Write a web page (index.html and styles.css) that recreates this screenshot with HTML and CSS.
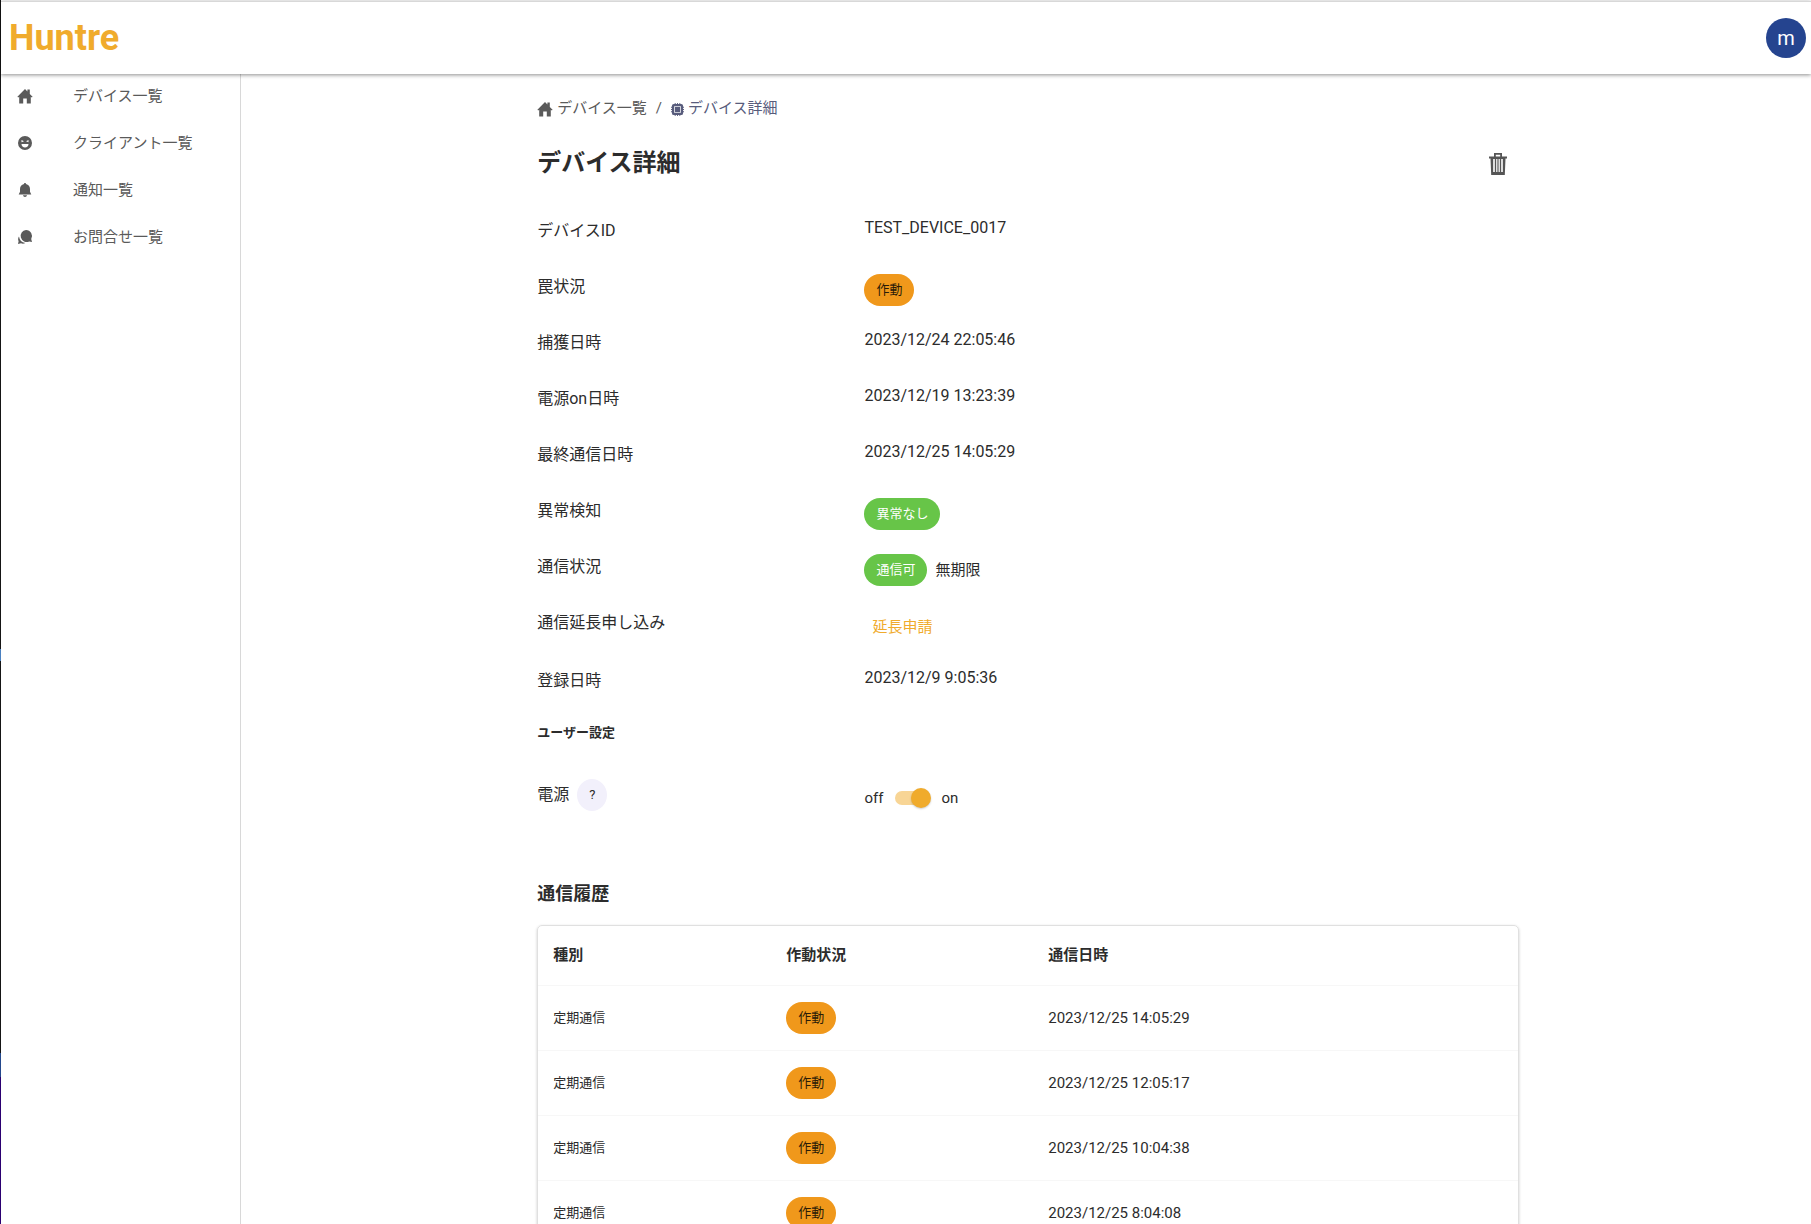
FILE: index.html
```html
<!DOCTYPE html>
<html lang="ja">
<head>
<meta charset="utf-8">
<title>デバイス詳細 | Huntre</title>
<link rel="stylesheet" href="styles.css">
</head>
<body>
<svg class="sprite" aria-hidden="true">
  <symbol id="home" viewBox="0 0 16 16"><path d="M8 1 .4 8.700l.8.8 1-.8V15.500h4v-5h3.600v5h4V8.700l1 .8.8-.8-2.800-2.700V1.600h-2.400v2z"/></symbol>
  <symbol id="smile" viewBox="0 0 16 16"><path fill-rule="evenodd" d="M8 1a7 7 0 1 0 0 14A7 7 0 0 0 8 1zM4.500 5l2.500 1.200-2.500 1zM11.500 5v2.200L9 6.200zM4.500 9h7c0 2.200-1.500 3.600-3.500 3.600S4.500 11.200 4.500 9z"/></symbol>
  <symbol id="bell" viewBox="0 0 16 16"><path d="M8 1c.6 0 1 .4 1 1 2.500.5 4 2.400 4 5v2.800l1.300 2.700H1.700L3 9.800V7c0-2.600 1.500-4.500 4-5 0-.6.4-1 1-1zM6 13.300h4c-.2 1-1 1.600-2 1.600s-1.800-.6-2-1.600z"/></symbol>
  <symbol id="chat" viewBox="0 0 16 16"><path d="M9 1a6 6 0 0 1 5.200 9l.8 3-2.800-.6A6 6 0 1 1 9 1z"/><path d="M2 7.500a7.500 7.500 0 0 0 6.300 6.400c-1.300.9-2.800 1-4.300.4L1 15l.6-2.800c-.8-1.600-.5-3.400.4-4.700z"/></symbol>
  <symbol id="chip" viewBox="1 1 14 14"><path fill-rule="evenodd" d="M4 2h1V1h1v1h1.500V1h1v1H10V1h1v1h1a2 2 0 0 1 2 2v1h1v1h-1v1.500h1v1h-1V10h1v1h-1v1a2 2 0 0 1-2 2h-1v1h-1v-1H8.500v1h-1v-1H6v1H5v-1H4a2 2 0 0 1-2-2v-1H1v-1h1V8.500H1v-1h1V6H1V5h1V4a2 2 0 0 1 2-2zM4.400 4.400v7.200h7.200V4.400z"/><path d="M5.200 5.200h5.600v5.600H5.200z"/></symbol>
  <symbol id="trash" viewBox="0 0 20 22"><path fill-rule="evenodd" d="M6 0h8v3.500h5V5.500h-1.500L16.800 22H3.200L2.500 5.500H1v-2h5zM7.800 1.700v1.800h4.400V1.700zM5.200 6v13h1.600V6zM8.200 6v13h1.200V6zM10.600 6v13h1.200V6zM13.200 6v13h1.600V6z"/></symbol>
</svg>
<header class="topbar">
  <a class="logo" href="#">Huntre</a>
  <button class="avatar" type="button" aria-label="アカウント">m</button>
</header>
<div class="layout">
  <nav class="sidebar">
    <a href="#"><svg class="icon"><use href="#home"/></svg>デバイス一覧</a>
    <a href="#"><svg class="icon"><use href="#smile"/></svg>クライアント一覧</a>
    <a href="#"><svg class="icon"><use href="#bell"/></svg>通知一覧</a>
    <a href="#"><svg class="icon"><use href="#chat"/></svg>お問合せ一覧</a>
  </nav>
  <main class="main">
    <div class="content">
      <nav class="breadcrumb">
        <a href="#"><svg class="icon"><use href="#home"/></svg>デバイス一覧</a>
        <span>/</span>
        <a class="current" href="#"><svg class="icon small"><use href="#chip"/></svg>デバイス詳細</a>
      </nav>
      <div class="title-row">
        <h1>デバイス詳細</h1>
        <button class="delete" type="button" aria-label="削除"><svg><use href="#trash"/></svg></button>
      </div>
      <dl class="details">
        <div><dt>デバイスID</dt><dd>TEST_DEVICE_0017</dd></div>
        <div><dt>罠状況</dt><dd><span class="badge active">作動</span></dd></div>
        <div><dt>捕獲日時</dt><dd>2023/12/24 22:05:46</dd></div>
        <div><dt>電源on日時</dt><dd>2023/12/19 13:23:39</dd></div>
        <div><dt>最終通信日時</dt><dd>2023/12/25 14:05:29</dd></div>
        <div><dt>異常検知</dt><dd><span class="badge ok">異常なし</span></dd></div>
        <div><dt>通信状況</dt><dd class="inline"><span class="badge ok">通信可</span>無期限</dd></div>
        <div><dt>通信延長申し込み</dt><dd><button class="extend" type="button">延長申請</button></dd></div>
        <div><dt>登録日時</dt><dd>2023/12/9 9:05:36</dd></div>
      </dl>
      <h3>ユーザー設定</h3>
      <div class="setting">
        <div class="setting-label"><label for="power">電源</label><button class="help" type="button">?</button></div>
        <div class="toggle"><span>off</span><input id="power" class="switch" type="checkbox" role="switch" checked><span>on</span></div>
      </div>
      <h2>通信履歴</h2>
      <div class="card">
        <table>
          <thead><tr><th class="kind">種別</th><th class="state">作動状況</th><th>通信日時</th></tr></thead>
          <tbody>
            <tr><td class="kind">定期通信</td><td><span class="badge active">作動</span></td><td>2023/12/25 14:05:29</td></tr>
            <tr><td class="kind">定期通信</td><td><span class="badge active">作動</span></td><td>2023/12/25 12:05:17</td></tr>
            <tr><td class="kind">定期通信</td><td><span class="badge active">作動</span></td><td>2023/12/25 10:04:38</td></tr>
            <tr><td class="kind">定期通信</td><td><span class="badge active">作動</span></td><td>2023/12/25 8:04:08</td></tr>
          </tbody>
        </table>
      </div>
    </div>
  </main>
</div>
</body>
</html>
```
FILE: styles.css
```css
* { box-sizing: border-box; }

html { height: 100%; overflow: hidden; }

body {
  height: 100%;
  margin: 0;
  padding-left: 1px;
  display: flex;
  flex-direction: column;
  overflow: hidden;
  background: linear-gradient(#151515 53%, #4a80c0 53%, #4a80c0 54%, #151515 54%, #151515 86%, #23488c 86%, #23488c 88%, #2b0071 88%) left / 1px 100% no-repeat #fff;
  color: #2c2c2c;
  font: 16px/24px Roboto, "Noto Sans CJK JP", sans-serif;
}

h1, h2, h3, dl, dd { margin: 0; }
a { color: inherit; text-decoration: none; }
button { border: 0; padding: 0; background: none; color: inherit; font: inherit; cursor: pointer; }
svg { fill: currentColor; }
.sprite { display: none; }
.icon { width: 16px; height: 16px; flex: none; }
.icon.small { width: 13px; height: 13px; }

.topbar {
  flex: none;
  display: flex;
  align-items: center;
  justify-content: space-between;
  height: 73px;
  margin-top: 1px;
  padding: 0 5px 0 8px;
  border-top: 1px solid #d8d8d8;
  background: #fff;
  box-shadow: 0 1px 4px rgba(0, 0, 0, .45);
  z-index: 1;
}
.logo { color: #f0ab2c; font-size: 36px; line-height: 40px; font-weight: 700; }
.avatar { width: 40px; height: 40px; border-radius: 50%; background: #25448f; color: #fff; font-size: 20px; }

.layout { flex: 1; display: flex; min-height: 0; }
.sidebar {
  flex: none;
  display: flex;
  flex-direction: column;
  gap: 3px;
  width: 240px;
  border-right: 1px solid #d8d8d8;
  color: #5a5a5a;
  font-size: 15px;
}
.sidebar a { display: flex; align-items: center; gap: 40px; height: 44px; padding-left: 16px; }
.main { flex: 1; padding: 0 4px 0 8px; }
.content { width: 63%; margin: 0 auto; padding-top: 22px; }

.breadcrumb { display: flex; gap: 9px; color: #5a5a5a; font-size: 15px; }
.breadcrumb a { display: flex; align-items: center; gap: 4px; }
.breadcrumb .icon { margin-top: 2px; }
.breadcrumb .current { color: #585c7c; }

.title-row { display: flex; align-items: center; justify-content: space-between; height: 86px; padding-right: 11px; }
h1 { font-size: 24px; line-height: 32px; }
.delete { width: 20px; height: 22px; margin-top: 2px; color: #555; }
.delete svg { display: block; width: 20px; height: 22px; }

.details > div { display: grid; grid-template-columns: 1fr 2fr; min-height: 56px; padding: 12px 0; }
.details dt { line-height: 26px; }
dd { line-height: 20px; }
dd.inline { display: flex; align-items: center; gap: 8px; font-size: 15px; }
.badge {
  display: inline-block;
  padding: 0 12px;
  border-radius: 16px;
  font-size: 13px;
  line-height: 32px;
  vertical-align: top;
}
.badge.active { background: #f0981b; color: #2b1c08; }
.badge.ok { background: #67c548; color: #fff; }
.extend { display: block; height: 34px; padding: 0 8px; color: #f0ab2c; font-size: 15px; }

h3 { padding-top: 11px; font-size: 13px; line-height: 20px; }
.setting { display: grid; grid-template-columns: 1fr 2fr; margin-top: 36px; }
.setting-label { display: flex; align-items: center; gap: 8px; }
.help { width: 30px; height: 32px; border-radius: 50%; background: #f2f0fb; font-size: 13px; }
.toggle { display: flex; align-items: center; padding-top: 6px; font-size: 15px; gap: 12px; }
.switch {
  appearance: none;
  display: flex;
  align-items: center;
  justify-content: flex-end;
  width: 34px;
  height: 14px;
  margin: 0;
  border-radius: 7px;
  background: #f8d595;
}
.switch::before {
  content: "";
  flex: none;
  width: 20px;
  height: 20px;
  margin-right: -2px;
  border-radius: 50%;
  background: #f0ab2c;
  box-shadow: 0 1px 2px rgba(0, 0, 0, .2);
}

h2 { margin-top: 71px; font-size: 18px; line-height: 24px; }
.card { margin-top: 19px; border: 1px solid #e0e0e0; border-radius: 5px; box-shadow: 0 1px 3px rgba(0, 0, 0, .2); }
table { width: 100%; border-collapse: collapse; table-layout: fixed; font-size: 15px; }
th, td { padding: 0 15px; text-align: left; border-bottom: 1px solid #f7f7f7; }
th { height: 59px; }
td { height: 65px; }
td.kind { font-size: 13px; }
.kind { width: 233px; }
.state { width: 262px; }
```
